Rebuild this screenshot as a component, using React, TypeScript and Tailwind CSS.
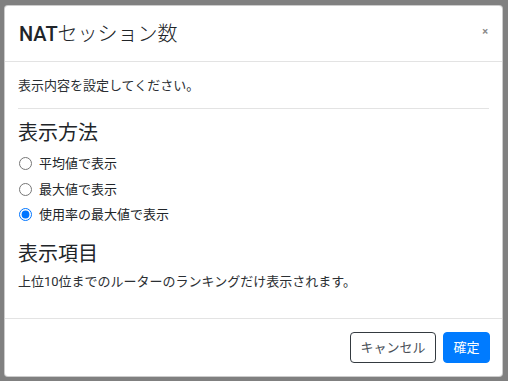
import { useState } from 'react'

const font = { fontFamily: 'Roboto, "Noto Sans CJK JP", sans-serif' }

const options = ['平均値で表示', '最大値で表示', '使用率の最大値で表示']

export default function App() {
  const [mode, setMode] = useState(2)

  return (
    <div className="w-[508px] h-[381px] bg-[#808080] overflow-hidden pt-[5px] pl-[4px]" style={font}>
      <div className="w-[499px] h-[372px] bg-white border border-black/20 rounded-[4px] flex flex-col text-[#212529]">
        <div className="h-[56px] shrink-0 flex items-center justify-between pl-[14px] pr-[14px] border-b border-[#e3e3e3]">
          <h5 className="text-[20px] leading-[24px] font-light">
            <span className="font-medium">NAT</span>セッション数
          </h5>
          <button className="text-[11px] leading-none font-bold text-[#8a8a8a] mt-[-4px]">×</button>
        </div>

        <div className="flex-1 px-[13px] pt-[14px]">
          <p className="text-[13px] leading-[20px] text-[#2b2f33]">表示内容を設定してください。</p>
          <div className="mt-[12px] h-px bg-[#e3e3e3]" />

          <h5 className="mt-[12px] text-[20px] leading-[24px]">表示方法</h5>
          <div className="mt-[6px] flex flex-col">
            {options.map((label, i) => (
              <label key={label} className="h-[25.5px] flex items-center gap-[7px] pl-[1px] text-[13px] cursor-pointer">
                <input
                  type="radio"
                  name="mode"
                  checked={mode === i}
                  onChange={() => setMode(i)}
                  className="m-0 w-[13px] h-[13px] accent-[#0075ff]"
                />
                {label}
              </label>
            ))}
          </div>

          <h5 className="mt-[14px] text-[20px] leading-[24px]">表示項目</h5>
          <p className="mt-[6px] text-[13px] leading-[20px] text-[#2b2f33]">上位10位までのルーターのランキングだけ表示されます。</p>
        </div>

        <div className="h-[58px] shrink-0 border-t border-[#e3e3e3] flex items-center justify-end gap-[7px] pr-[12px]">
          <button className="h-[31px] w-[86px] rounded-[4px] border border-[#343a40] text-[13px] text-[#495057] bg-white">
            キャンセル
          </button>
          <button className="h-[31px] w-[47px] rounded-[4px] border border-[#007bff] bg-[#007bff] text-[13px] text-white">
            確定
          </button>
        </div>
      </div>
    </div>
  )
}
